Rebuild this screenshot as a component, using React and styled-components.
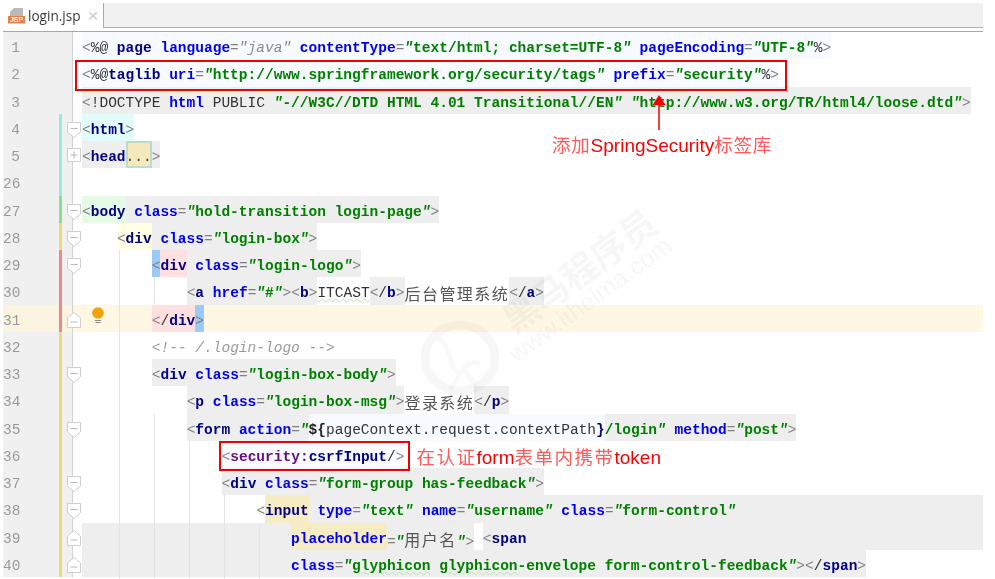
import React from "react";
import styled, { createGlobalStyle } from "styled-components";

const GlobalStyle = createGlobalStyle`
  html, body {
    margin: 0;
    padding: 0;
    background: #fff;
  }
`;

const ROW_HEIGHT = 27.25;

const BANDS = {
  none: "transparent",
  gray: "#eeeeee",
  ice: "#f7faff",
  cyan: "#e2fbfb",
  mint: "#e6fbe6",
  cream: "#ffffe4",
  brace: "#9bcbf5",
  pink: "#ffe0e0",
  gold: "#f6ecc4",
};

const TOKENS = {
  p: "color:#808080;",
  d: "color:#333;",
  t: "color:#000080;font-weight:700;",
  a: "color:#0000f0;font-weight:700;",
  s: "color:#008000;font-weight:700;",
  q: "color:#008000;font-weight:700;font-style:italic;",
  g: "color:#8a8a8a;font-style:italic;",
  c: "color:#9a9a9a;font-style:italic;",
  x: "color:#333;font-weight:400;",
  b: "color:#222;font-weight:700;",
  m: "color:#660e7a;font-weight:700;",
  u: "color:#333;text-decoration:underline wavy #b8e0b8 1px;",
  w: "color:#008000;font-weight:700;text-decoration:underline wavy #b8e0b8 1px;",
  k: `color:#555;font-family:"Noto Sans CJK SC",sans-serif;font-size:16px;letter-spacing:1.44px;`,
};

const Page = styled.div`
  position: relative;
  width: 995px;
  height: 579px;
  overflow: hidden;
  background: #fff;
  filter: blur(0.4px);
`;

const TabBar = styled.div`
  display: flex;
  width: 980px;
  height: 28px;
  margin: 3px 0 0 3px;
  border-bottom: 1px solid #a8a8a8;
`;

const Tab = styled.div`
  display: flex;
  align-items: center;
  gap: 3px;
  width: 100px;
  box-sizing: border-box;
  padding: 0 0 3px 5px;
  font: 13.6px "Open Sans", "Liberation Sans", sans-serif;
  color: #3a3a3a;
`;

const TabClose = styled.span`
  margin-left: 4px;
  font: 19px "Liberation Sans", sans-serif;
  color: #cacaca;
`;

const TabFiller = styled.div`
  flex: 1;
  height: 24px;
  background: #f1f1f1;
  border-left: 1px solid #a8a8a8;
  border-bottom: 1px solid #b0b0b0;
`;

const Editor = styled.div`
  margin-left: 3px;
  width: 980px;
`;

const Row = styled.div`
  position: relative;
  z-index: ${(p) => (p.$raised ? 1 : "auto")};
  display: flex;
  height: ${ROW_HEIGHT}px;
  background: ${(p) => (p.$current ? "#fdf7e4" : "transparent")};
`;

const Gutter = styled.div`
  position: relative;
  flex: none;
  display: flex;
  width: 70px;
  box-sizing: border-box;
  background: ${(p) => (p.$current ? "#f9f3df" : "#f0f0f0")};
  border-right: 1px solid #d2d2d2;
`;

const LineNo = styled.span`
  width: 17px;
  margin-right: 39px;
  text-align: right;
  font: 14.5px/33px "Liberation Mono", monospace;
  color: #9a9a9a;
`;

const Marker = styled.span`
  width: 2.5px;
  background: ${(p) => p.$color || "transparent"};
`;

const Code = styled.div`
  flex: 1;
  display: flex;
  margin-left: 9px;
  padding-left: ${(p) => p.$indent * 8.72}px;
  font: 14.53px "Liberation Mono", monospace;
  white-space: pre;
`;

const Band = styled.span`
  position: relative;
  flex: ${(p) => (p.$grow ? 1 : "none")};
  height: ${ROW_HEIGHT}px;
  line-height: 33px;
  background: ${(p) => BANDS[p.$bg]};

  ${(p) =>
    p.$box &&
    `&::after {
      content: "";
      position: absolute;
      inset: ${p.$box};
      border: 2px solid #f00000;
    }`}
`;

const Collapsed = styled.span`
  flex: none;
  width: 26.16px;
  height: ${ROW_HEIGHT}px;
  box-sizing: border-box;
  line-height: 29px;
  background: #f5e8bc;
  border: 2px solid #b9dccb;
  color: #444;
  text-indent: -2px;
`;

const Token = styled.span`
  ${(p) => TOKENS[p.$kind]}
`;

const FoldIcon = styled.svg`
  position: absolute;
  left: 63.5px;
  top: ${(p) => p.$top}px;
  width: 14px;
  height: 17px;
`;

const Bulb = styled.svg`
  position: absolute;
  left: 87.5px;
  top: 1px;
  width: 14px;
  height: 20px;
`;

const Guide = styled.div`
  position: absolute;
  left: ${(p) => p.$x}px;
  top: ${(p) => p.$top}px;
  height: ${(p) => p.$h}px;
  width: 1px;
  background: #e4e4e4;
`;

const Callout = styled.div`
  position: absolute;
  z-index: 2;
  left: 552px;
  top: 94px;
  display: flex;
  flex-direction: column;
  align-items: flex-start;
`;

const Arrow = styled.svg`
  width: 18px;
  height: 37px;
  margin-left: 98px;
`;

const Note = styled.div`
  font: 19px/26px "Liberation Sans", sans-serif;
  color: #f60000;
  white-space: nowrap;
`;

const InlineNote = styled(Note)`
  margin: 1px 0 0 12px;
  line-height: 29px;
`;

const NoteCjk = styled.span`
  font-family: "Noto Sans CJK SC", sans-serif;
  font-size: 18.5px;
  letter-spacing: ${(p) => (p.$wide ? 1.5 : 0.8)}px;
  color: #ff5a5a;
`;

const WatermarkText = styled.div`
  position: absolute;
  left: ${(p) => p.$x}px;
  top: ${(p) => p.$y}px;
  transform: rotate(-36deg);
  white-space: nowrap;
  color: rgba(0, 0, 0, 0.035);
  font-family: ${(p) => (p.$cjk ? '"Noto Sans CJK SC"' : '"Liberation Sans"')}, sans-serif;
  font-size: ${(p) => p.$size}px;
  font-weight: ${(p) => (p.$cjk ? 700 : 400)};
`;

const WatermarkLogo = styled.svg`
  position: absolute;
  left: 420px;
  top: 320px;
  width: 80px;
  height: 76px;
`;

const attr = (name, value) => [
  ["a", name],
  ["p", "="],
  ["q", '"'],
  ["s", value],
  ["q", '"'],
];
const L = ["p", "<"];
const R = ["p", ">"];
const SP = ["x", " "];

const rows = [
  {
    n: 1,
    code: [
      ["ice", [L, ["d", "%@"], SP, ["t", "page"], SP, ["a", "language"], ["p", "="], ["g", '"java"'], SP,
        ...attr("contentType", "text/html; charset=UTF-8"), SP,
        ...attr("pageEncoding", "UTF-8"), ["d", "%"], R]],
    ],
  },
  {
    n: 2,
    box: "0.5px -8.4px -4.5px -7px",
    code: [
      ["ice", [L, ["d", "%@"], ["t", "taglib"], SP,
        ...attr("uri", "http://www.springframework.org/security/tags"), SP,
        ...attr("prefix", "security"), ["d", "%"], R]],
    ],
  },
  {
    n: 3,
    code: [
      ["gray", [["p", "<"], ["d", "!DOCTYPE"], SP, ["a", "html"], SP, ["d", "PUBLIC"], SP,
        ["q", '"'], ["s", "-//W3C//DTD HTML 4.01 Transitional//EN"], ["q", '"'], SP,
        ["q", '"'], ["s", "http://www.w3.org/TR/html4/loose.dtd"], ["q", '"'], R]],
    ],
  },
  { n: 4, mark: "#9fe6e0", fold: "down", code: [["cyan", [L, ["t", "html"], R]]] },
  {
    n: 5,
    mark: "#9fe6e0",
    fold: "plus",
    code: [["gray", [L, ["t", "head"]]], ["dots"], ["gray", [R]]],
  },
  { n: 26, mark: "#9fe6e0", code: [] },
  {
    n: 27,
    mark: "#8fdc9a",
    fold: "down",
    code: [
      ["mint", [L, ["t", "body"]]],
      ["gray", [SP, ...attr("class", "hold-transition login-page"), R]],
    ],
  },
  {
    n: 28,
    mark: "#e6dc7a",
    fold: "down",
    indent: 4,
    code: [
      ["cream", [L, ["t", "div"]]],
      ["gray", [SP, ...attr("class", "login-box"), R]],
    ],
  },
  {
    n: 29,
    mark: "#e88a8a",
    fold: "down",
    indent: 8,
    code: [
      ["brace", [L]],
      ["pink", [["t", "div"]]],
      ["gray", [SP, ...attr("class", "login-logo"), R]],
    ],
  },
  {
    n: 30,
    mark: "#e88a8a",
    indent: 12,
    code: [
      ["gray", [L, ["t", "a"], SP, ...attr("href", "#"), R, L, ["t", "b"], R]],
      ["none", [["u", "ITCAST"]]],
      ["gray", [L, ["d", "/"], ["t", "b"], R]],
      ["none", [["k", "后台管理系统"]]],
      ["gray", [L, ["d", "/"], ["t", "a"], R]],
    ],
  },
  {
    n: 31,
    mark: "#e88a8a",
    fold: "up",
    current: true,
    bulb: true,
    indent: 8,
    code: [
      ["pink", [L, ["d", "/"], ["t", "div"]]],
      ["brace", [R]],
    ],
  },
  { n: 32, mark: "#e6dc7a", indent: 8, code: [["none", [["c", "<!-- /.login-logo -->"]]]] },
  {
    n: 33,
    mark: "#e6dc7a",
    fold: "down",
    indent: 8,
    code: [["gray", [L, ["t", "div"], SP, ...attr("class", "login-box-body"), R]]],
  },
  {
    n: 34,
    mark: "#e6dc7a",
    indent: 12,
    code: [
      ["gray", [L, ["t", "p"], SP, ...attr("class", "login-box-msg"), R]],
      ["none", [["k", "登录系统"]]],
      ["gray", [L, ["d", "/"], ["t", "p"], R]],
    ],
  },
  {
    n: 35,
    mark: "#e6dc7a",
    fold: "down",
    indent: 12,
    code: [
      ["gray", [L, ["t", "form"], SP, ["a", "action"], ["p", "="], ["q", '"']]],
      ["ice", [["b", "${"], ["x", "pageContext.request.contextPath"], ["t", "}"]]],
      ["gray", [["s", "/login"], ["q", '"'], SP, ...attr("method", "post"), R]],
    ],
  },
  {
    n: 36,
    mark: "#e6dc7a",
    indent: 16,
    box: "0 -6px -3px -3px",
    note: true,
    code: [["ice", [L, ["m", "security:"], ["t", "csrfInput"], ["d", "/"], R]]],
  },
  {
    n: 37,
    mark: "#e6dc7a",
    fold: "down",
    indent: 16,
    code: [["gray", [L, ["t", "div"], SP, ...attr("class", "form-group has-feedback"), R]]],
  },
  {
    n: 38,
    mark: "#e6dc7a",
    fold: "down",
    indent: 20,
    code: [
      ["none", [L]],
      ["gold", [["t", "input"]]],
      ["gray!", [SP, ...attr("type", "text"), SP, ...attr("name", "username"), SP, ...attr("class", "form-control")]],
    ],
  },
  {
    n: 39,
    mark: "#e6dc7a",
    fold: "up",
    code: [
      ["gray", [["x", " ".repeat(24)]]],
      ["gold", [["a", "placeholder"]]],
      ["gray", [["p", "="], ["q", '"'], ["k", "用户名"], ["q", '"'], R]],
      ["none", [SP]],
      ["gray!", [L, ["t", "span"]]],
    ],
  },
  {
    n: 40,
    mark: "#e6dc7a",
    fold: "up",
    code: [
      ["gray", [["x", " ".repeat(24)], ["a", "class"], ["p", "="], ["q", '"'], ["w", "glyphicon"], ["s", " "],
        ["w", "glyphicon"], ["s", "-envelope form-control-feedback"], ["q", '"'], R,
        L, ["d", "/"], ["t", "span"], R]],
    ],
  },
];

// indent guides, drawn over the code rows: [x, top, height]
const guides = [
  [119, 250, 329],
  [154, 277, 27],
  [154, 414, 165],
  [189, 441, 138],
  [224, 495, 84],
  [259, 523, 56],
];

// fold markers of the editor gutter: a pentagon pointing down or up, or a plain box
function Fold({ type }) {
  const outline = {
    down: "M.5 .5H13.5V10L7 15.5L.5 10Z",
    up: "M.5 15.5H13.5V6L7 .5L.5 6Z",
    plus: "M.5 1.5H13.5V14.5H.5Z",
  }[type];
  const barY = type === "down" ? 6.5 : type === "up" ? 10 : 8;
  return (
    <FoldIcon $top={type === "plus" ? 6 : type === "up" ? 7 : 8} viewBox="0 0 14 17">
      <path d={outline} fill="#fff" stroke="#cfcfcf" />
      <path d={`M3.5 ${barY}H10.5`} stroke="#b8b8b8" />
      {type === "plus" && <path d="M7 4.5V11.5" stroke="#b8b8b8" />}
    </FoldIcon>
  );
}

function JspIcon() {
  return (
    <svg width="17" height="18" viewBox="0 0 17 18">
      <path d="M6 1H15V9H2V5Z" fill="#b9b9b9" />
      <rect x="0" y="9" width="17" height="7.5" fill="#e0824a" />
      <text x="8.5" y="15.4" fontSize="7" fontWeight="700" textAnchor="middle" fill="#fff" fontFamily="Liberation Sans">
        JSP
      </text>
    </svg>
  );
}

function CodeLine({ row }) {
  return (
    <Row $current={row.current} $raised={!!row.box}>
      <Gutter $current={row.current}>
        <LineNo>{row.n}</LineNo>
        <Marker $color={row.mark} />
        {row.fold && <Fold type={row.fold} />}
      </Gutter>
      <Code $indent={row.indent || 0}>
        {row.code.map(([bg, tokens], i) =>
          bg === "dots" ? (
            <Collapsed key={i}>...</Collapsed>
          ) : (
            <Band key={i} $bg={bg.replace("!", "")} $grow={bg.endsWith("!")} $box={row.box}>
              {tokens.map(([kind, text], j) => (
                <Token key={j} $kind={kind}>
                  {text}
                </Token>
              ))}
            </Band>
          )
        )}
        {row.note && (
          <InlineNote>
            <NoteCjk $wide>在认证</NoteCjk>form<NoteCjk $wide>表单内携带</NoteCjk>token
          </InlineNote>
        )}
      </Code>
      {row.bulb && (
        <Bulb viewBox="0 0 14 20">
          <circle cx="7" cy="7" r="5.8" fill="#f0a30a" />
          <path d="M4 14.5H10M4.5 16.5H9.5" stroke="#8a8a8a" />
        </Bulb>
      )}
    </Row>
  );
}

export default function App() {
  return (
    <Page>
      <GlobalStyle />
      <TabBar>
        <Tab>
          <JspIcon />
          login.jsp
          <TabClose>×</TabClose>
        </Tab>
        <TabFiller />
      </TabBar>
      <Editor>
        {rows.map((row) => (
          <CodeLine key={row.n} row={row} />
        ))}
      </Editor>

      {guides.map(([x, top, h]) => (
        <Guide key={`${x}-${top}`} $x={x} $top={top} $h={h} />
      ))}

      <WatermarkLogo viewBox="0 0 80 76">
        <ellipse cx="40" cy="38" rx="35" ry="33" fill="none" stroke="rgba(0,0,0,0.03)" strokeWidth="9" />
        <path d="M18 18C34 28 26 46 40 54C46 44 52 40 60 44M40 54L30 70M44 50L56 66" fill="none" stroke="rgba(0,0,0,0.025)" strokeWidth="5" />
      </WatermarkLogo>
      <WatermarkText $cjk $size={36} $x={488} $y={243}>
        黑马程序员
      </WatermarkText>
      <WatermarkText $size={25} $x={493} $y={285}>
        www.itheima.com
      </WatermarkText>

      <Callout>
        <Arrow viewBox="0 0 18 37">
          <path d="M9 1L15.5 11H2.5Z" fill="#f00000" />
          <path d="M9 10V36" stroke="#f00000" strokeWidth="1.5" />
        </Arrow>
        <Note>
          <NoteCjk>添加</NoteCjk>SpringSecurity<NoteCjk>标签库</NoteCjk>
        </Note>
      </Callout>
    </Page>
  );
}
